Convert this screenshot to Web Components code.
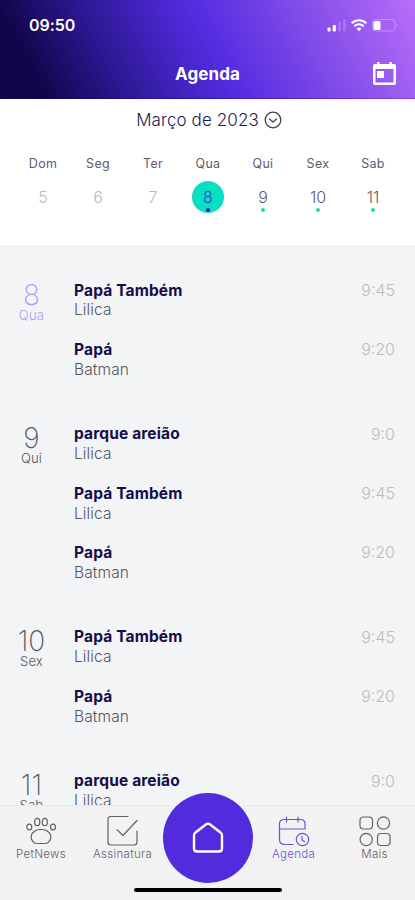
<!DOCTYPE html>
<html lang="pt-BR">
<head>
<meta charset="utf-8">
<title>Agenda</title>
<style>
html,body{margin:0;padding:0}
body{width:415px;height:900px;overflow:hidden;font-family:Inter,"Liberation Sans",sans-serif}
</style>
</head>
<body>
<agenda-app></agenda-app>
<script>
const define = (name, html) => customElements.define(name, class extends HTMLElement {
  connectedCallback() {
    if (this.shadowRoot) return;
    const root = this.attachShadow({ mode: 'open' });
    const t = document.createElement('template');
    t.innerHTML = typeof html === 'function' ? html(this) : html;
    root.append(t.content.cloneNode(true));
  }
});

define('status-bar', `
<style>
:host{display:flex;justify-content:space-between;height:51px;color:#fff;box-sizing:border-box;padding:15px 16px 0 29px}
time{font-size:16px;font-weight:600;line-height:20px;letter-spacing:-.05px}
svg{display:block;margin-top:2px}
</style>
<time>09:50</time>
<svg width="73" height="16" viewBox="326 17 73 16" fill="#fff">
<rect x="327.500" y="27.500" width="3" height="4" rx="1"/><rect x="332.700" y="25" width="3.200" height="6.500" rx="1"/>
<g opacity=".18"><rect x="338" y="22" width="3" height="9.500" rx="1"/><rect x="343" y="19.500" width="3" height="12" rx="1"/></g>
<g fill="none" stroke="#fff" stroke-width="2.100"><path d="M351.700 23.200a10.500 10.500 0 0 1 14.600 0"/><path d="M354.300 26.200a6.800 6.800 0 0 1 9.400 0"/></g>
<path d="M356.600 28.500a3.700 3.700 0 0 1 4.800 0L359 31.200Z"/>
<rect x="372.500" y="19.500" width="22.500" height="11.500" rx="3" fill="none" stroke="#fff" stroke-opacity=".28"/>
<rect x="373.500" y="21" width="7" height="9" rx="1.500"/><path d="M396.500 23.200q1.800 2 0 4Z" opacity=".35"/>
</svg>`);

define('top-bar', `
<style>
:host{display:block;height:98.500px;box-sizing:border-box;border-bottom:1px solid;border-image:linear-gradient(90deg,#10053f,#2a10b6 45%,#8a3fe0) 1;background:linear-gradient(63deg,#110448 0%,#13054c 10%,#2f1a98 29%,#4a27d0 45%,#572ee0 53%,#8750ea 77%,#b96df9 100%)}
div{display:grid;grid-template-columns:1fr auto 1fr;align-items:center;height:46px;padding:0 18px}
h1{grid-column:2;margin:0;color:#fff;font-size:17px;font-weight:700;letter-spacing:.1px;line-height:22px}
svg{justify-self:end;display:block}
</style>
<status-bar></status-bar>
<div><h1>Agenda</h1>
<svg width="25" height="26" viewBox="0 0 25 26" fill="#fff"><path fill-rule="evenodd" d="M3 3H5V1H7.500V3H17.500V1H20V3H22Q24 3 24 5V22Q24 24 22 24H3Q1 24 1 22V5Q1 3 3 3ZM3.500 8V21.500H21.500V8Z"/><rect x="5" y="10" width="7" height="7"/></svg></div>`);

define('week-day', el => {
  const s = el.getAttribute('state');
  return `<style>
:host{display:flex;flex-direction:column;align-items:center;width:40px;color:#5e5b6b}
.n{font-size:12.500px;line-height:18px;letter-spacing:.3px}
.d{display:flex;flex-direction:column;align-items:center;box-sizing:border-box;width:32px;height:32px;margin-top:8px;padding-top:6px;border-radius:50%;font-size:16px;line-height:20px;font-weight:300}
.d i{width:4px;height:4px;border-radius:50%;background:#1fdcbd;margin-top:1px}
.past{color:#b9b9be}.past i{visibility:hidden}
.active{background:#06dfc0;color:#3b45d0}.active i{background:#2510b4}
</style><span class="n">${el.getAttribute('name')}</span><span class="d ${s || ''}">${el.getAttribute('day')}<i></i></span>`;
});

define('week-strip', `
<style>
:host{display:block;height:146.500px;background:#fff}
header{display:flex;justify-content:center;align-items:center;gap:5px;padding-top:10.500px;line-height:22px;font-size:17px;font-weight:300;letter-spacing:.1px;color:#211b4b;padding-left:3px}
svg{display:block}
div{display:flex;justify-content:space-between;padding:24px 22px 0 23px}
</style>
<header><span>Março de 2023</span><svg width="18" height="18" viewBox="0 0 18 18" fill="none" stroke="#44404f" stroke-width="1.300"><circle cx="9" cy="9" r="7.800"/><path d="m5.500 8 3.500 3 3.500-3" stroke-linecap="round" stroke-linejoin="round"/></svg></header>
<div><week-day name="Dom" day="5" state="past"></week-day><week-day name="Seg" day="6" state="past"></week-day><week-day name="Ter" day="7" state="past"></week-day><week-day name="Qua" day="8" state="active"></week-day><week-day name="Qui" day="9"></week-day><week-day name="Sex" day="10"></week-day><week-day name="Sab" day="11"></week-day></div>`);

define('agenda-event', el => `
<style>
:host{display:grid;grid-template-columns:1fr auto;height:59.200px;line-height:20px;font-size:15.500px}
b{font-weight:700;color:#150d49;letter-spacing:.14px}
time{color:#bcbcc0;font-weight:300;font-size:16px;margin-top:-.5px}
span{font-weight:300;color:#56565c;grid-column:1;height:39px;margin-top:-.3px;letter-spacing:.1px}
</style><b>${el.getAttribute('title-text')}</b><time>${el.getAttribute('time')}</time><span>${el.getAttribute('pet')}</span>`);

define('agenda-day', el => `
<style>
:host{display:grid;grid-template-columns:62px 1fr;column-gap:12px;margin-bottom:25.500px;padding-right:20px;color:#555662}
:host([current]){color:#b69bf3}
aside{text-align:center;padding-left:1px}
strong{display:block;font-size:28px;font-weight:200;line-height:28px}
small{display:block;font-size:13px;font-weight:300;line-height:13px;letter-spacing:.2px}
</style>
<aside><strong>${el.getAttribute('day')}</strong><small>${el.getAttribute('name')}</small></aside><section><slot></slot></section>`);

define('nav-item', `
<style>
:host{display:flex;flex-direction:column;align-items:center;color:#626266;font-size:11.500px;line-height:14px;font-weight:300;letter-spacing:.3px}
:host([active]){color:#6954d9}
::slotted(svg){display:block;fill:none;stroke:currentColor;stroke-width:1.200;stroke-linecap:round;stroke-linejoin:round}
</style><slot name="icon"></slot><span><slot></slot></span>`);

define('nav-bar', `
<style>
:host{display:grid;grid-template-columns:82px 81px 90px 81px 81px;position:absolute;left:0;right:0;bottom:0;height:95px;background:#f2f2f3;box-sizing:border-box;border-top:1px solid #e7e9ec}
nav-item{padding-top:6.500px}
.home{width:90px;height:90px;margin-top:-13px;border-radius:50%;background:#512bdc;display:grid;place-items:center}
.bar{position:absolute;left:134px;bottom:8px;width:148px;height:4px;border-radius:3px;background:#000}
</style>
<nav-item><svg slot="icon" width="36" height="34" viewBox="0 0 36 34"><ellipse cx="6.300" cy="14" rx="2.500" ry="2.900"/><ellipse cx="14.200" cy="9" rx="2.600" ry="3.700"/><ellipse cx="21.800" cy="9" rx="2.600" ry="3.700"/><ellipse cx="30" cy="14" rx="2.500" ry="2.900"/><path d="M12.500 17.500Q18 15.500 23.500 17.500L27 20.500Q29 25.500 26 28.500Q25 30.500 22 30.500H14Q11 30.500 10 28.500Q7 25.500 9 20.500Z"/></svg>PetNews</nav-item>
<nav-item><svg slot="icon" width="36" height="34" viewBox="0 0 36 34"><path d="M23 3.500H6Q3 3.500 3 6.500V29Q3 32 6 32H29Q32 32 32 29V18M12 16.700 18 22.500 32 7.500"/></svg>Assinatura</nav-item>
<div class="home"><svg width="34" height="34" viewBox="0 0 34 34" fill="none" stroke="#fff" stroke-width="2.400" stroke-linejoin="round"><path d="M3 14.500Q3 12.500 4.500 11.500L15.200 3.200Q17 2 18.800 3.200L29.500 11.500Q31 12.500 31 14.500V27.500Q31 30.500 28 30.500H6Q3 30.500 3 27.500Z"/></svg></div>
<nav-item active><svg slot="icon" width="36" height="34" viewBox="0 0 36 34"><path d="M17 31.500H9Q3.500 31.500 3.500 26.500V11Q3.500 6.500 8 6.500H24.500Q29 6.500 29 11V16H3.500M10.500 4V9M22 4V9"/><circle cx="26.500" cy="26.500" r="6.200"/><path d="M26 23.300V27L28.500 28.500"/></svg>Agenda</nav-item>
<nav-item><svg slot="icon" width="36" height="34" viewBox="0 0 36 34"><rect x="3" y="4" width="12.500" height="12" rx="3.500"/><circle cx="26.500" cy="10" r="6.100"/><circle cx="9.200" cy="26.500" r="6.100"/><rect x="20.500" y="20.500" width="12.500" height="12" rx="3.500"/></svg>Mais</nav-item>
<i class="bar"></i>`);

define('agenda-app', `
<style>
:host{display:block;position:relative;width:415px;height:900px;overflow:hidden;background:#f2f4f6}
main{padding-top:35.500px}
</style>
<top-bar></top-bar><week-strip></week-strip>
<main>
<agenda-day day="8" name="Qua" current><agenda-event title-text="Papá Também" pet="Lilica" time="9:45"></agenda-event><agenda-event title-text="Papá" pet="Batman" time="9:20"></agenda-event></agenda-day>
<agenda-day day="9" name="Qui"><agenda-event title-text="parque areião" pet="Lilica" time="9:0"></agenda-event><agenda-event title-text="Papá Também" pet="Lilica" time="9:45"></agenda-event><agenda-event title-text="Papá" pet="Batman" time="9:20"></agenda-event></agenda-day>
<agenda-day day="10" name="Sex"><agenda-event title-text="Papá Também" pet="Lilica" time="9:45"></agenda-event><agenda-event title-text="Papá" pet="Batman" time="9:20"></agenda-event></agenda-day>
<agenda-day day="11" name="Sab"><agenda-event title-text="parque areião" pet="Lilica" time="9:0"></agenda-event></agenda-day>
</main>
<nav-bar></nav-bar>`);
</script>
</body>
</html>
